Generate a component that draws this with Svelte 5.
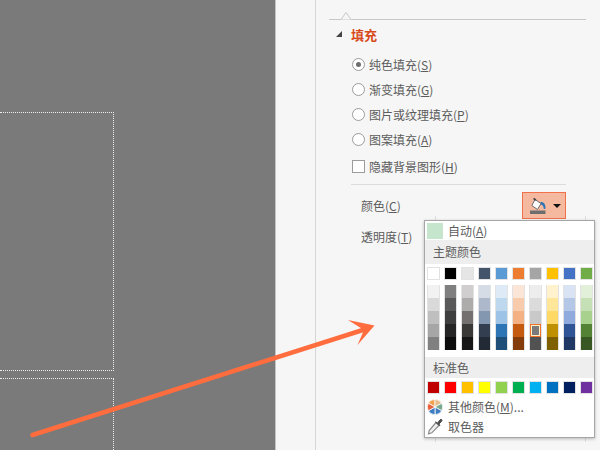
<script>
  const themeTop = ['#ffffff', '#000000', '#e7e6e6', '#44546a', '#5b9bd5', '#ed7d31', '#a5a5a5', '#ffc000', '#4472c4', '#70ad47'];
  const shades = [
    ['#f2f2f2', '#d9d9d9', '#bfbfbf', '#a6a6a6', '#808080'],
    ['#7f7f7f', '#595959', '#3f3f3f', '#262626', '#0d0d0d'],
    ['#d0cece', '#aeabab', '#757070', '#3b3838', '#171616'],
    ['#d6dce5', '#adb9ca', '#8497b0', '#333f50', '#222a35'],
    ['#deebf7', '#bdd7ee', '#9dc3e6', '#2e75b6', '#1f4e79'],
    ['#fbe5d6', '#f8cbad', '#f4b183', '#c55a11', '#843c0c'],
    ['#ededed', '#dbdbdb', '#c9c9c9', '#7b7b7b', '#525252'],
    ['#fff2cc', '#ffe699', '#ffd966', '#bf9000', '#7f6000'],
    ['#dae3f3', '#b4c7e7', '#8faadc', '#2f5597', '#203864'],
    ['#e2f0d9', '#c5e0b4', '#a9d18e', '#548235', '#385723']
  ];
  const standard = ['#c00000', '#ff0000', '#ffc000', '#ffff00', '#92d050', '#00b050', '#00b0f0', '#0070c0', '#002060', '#7030a0'];
  const fills = [
    { text: '纯色填充', key: 'S', checked: true },
    { text: '渐变填充', key: 'G' },
    { text: '图片或纹理填充', key: 'P' },
    { text: '图案填充', key: 'A' }
  ];
</script>

<div class="screen">
  <div class="slide">
    <div class="placeholder first"></div>
    <div class="placeholder second"></div>
  </div>

  <div class="gutter"></div>

  <div class="pane">
    <div class="tabline">
      <svg class="notch" width="16" height="9" viewBox="0 0 16 9">
        <path d="M0 8.5H3L8 1.5L13 8.5H16" fill="#f6f6f6" stroke="#c8c8c8" />
      </svg>
    </div>

    <div class="section-head">
      <span class="tri"></span>
      <span class="section-title">填充</span>
    </div>

    <div class="options">
      {#each fills as f}
        <div class="option">
          <span class="radio" class:on={f.checked}></span>
          <span>{f.text}(<u>{f.key}</u>)</span>
        </div>
      {/each}
      <div class="option check-row">
        <span class="check"></span>
        <span>隐藏背景图形(<u>H</u>)</span>
      </div>
    </div>

    <div class="divider"></div>

    <div class="color-row">
      <span>颜色(<u>C</u>)</span>
      <div class="fill-btn">
        <svg width="18" height="18" viewBox="0 0 18 18">
          <path d="M5 2.500L11 6.500L7.500 12.500L1.800 8.500Z" fill="#fff" stroke="#6a6a6a" />
          <path d="M3.500 1.500L6 3" stroke="#444" stroke-width="1.500" fill="none" />
          <path d="M10.500 5C13.500 4.500 15.500 7 15.500 10.500C15.500 12.500 13.500 12.500 13.500 10.500C13.500 8.500 12 8 11 7.500Z" fill="#2e75b6" />
          <rect x="0" y="13.500" width="15.500" height="3.500" fill="#6e6e6e" />
        </svg>
        <span class="caret"></span>
      </div>
    </div>

    <div class="alpha-row">
      <span>透明度(<u>T</u>)</span>
      <span class="slider-end"></span>
    </div>

    <div class="ghost-ticks"></div>
  </div>

  <div class="menu">
    <div class="auto-row">
      <span class="auto-swatch"></span>
      <span>自动(<u>A</u>)</span>
    </div>
    <div class="menu-head">主题颜色</div>
    <div class="swatches top">
      {#each themeTop as c}
        <span class="swatch" style:background={c}></span>
      {/each}
    </div>
    <div class="shades">
      {#each shades as col, i}
        <div class="shade-col">
          {#each col as c, j}
            <span class="shade" class:picked={i === 6 && j === 3} style:background={c}></span>
          {/each}
        </div>
      {/each}
    </div>
    <div class="menu-head std">标准色</div>
    <div class="swatches">
      {#each standard as c}
        <span class="swatch" style:background={c}></span>
      {/each}
    </div>
    <div class="menu-item more">
      <svg width="16" height="16" viewBox="0 0 16 16">
        <g stroke="#fff" stroke-width="0.800">
          <path d="M8 8L8 0.300A7.700 7.700 0 0 0 1.300 4.200Z" fill="#f0a050" />
          <path d="M8 8L8 0.300A7.700 7.700 0 0 1 14.700 4.200Z" fill="#e6bd8c" />
          <path d="M8 8L14.700 4.200A7.700 7.700 0 0 1 14.700 11.800Z" fill="#78a88e" />
          <path d="M8 8L14.700 11.800A7.700 7.700 0 0 1 8 15.700Z" fill="#3f7cc0" />
          <path d="M8 8L8 15.700A7.700 7.700 0 0 1 1.300 11.800Z" fill="#3f7cc0" />
          <path d="M8 8L1.300 11.800A7.700 7.700 0 0 1 1.300 4.200Z" fill="#e8603c" />
        </g>
      </svg>
      <span>其他颜色(<u>M</u>)...</span>
    </div>
    <div class="menu-item">
      <svg width="16" height="17" viewBox="0 0 16 17">
        <path d="M9 4.500L12 7.500L4.800 14.800L1.500 15.800L2.200 12.500Z" fill="#f0f0f0" stroke="#8a8a8a" stroke-width="1.200" />
        <path d="M8.500 4L10.500 5L13 1.800C14.200 0.600 15.800 2 14.700 3.300L12 6L13 8Z" fill="#505050" stroke="#505050" />
      </svg>
      <span>取色器</span>
    </div>
  </div>

  <svg class="arrow" width="600" height="450" viewBox="0 0 600 450">
    <path d="M32.500 435L366 329" stroke="#ff6d3f" stroke-width="4.500" stroke-linecap="round" fill="none" />
    <path d="M348 320L374.500 325.500L357.500 345L364 330Z" fill="#ff6d3f" />
  </svg>
</div>

<style>
  :global(body) {
    margin: 0;
  }
  .screen {
    position: relative;
    display: flex;
    width: 600px;
    height: 450px;
    overflow: hidden;
    font-family: "Noto Sans CJK SC", "Liberation Sans", sans-serif;
    font-size: 12px;
    color: #5c5c5c;
    background: #f6f6f6;
  }
  u {
    text-underline-offset: 1px;
  }

  .slide {
    flex: 0 0 276px;
    background: #7a7a7a;
    border-right: 1px solid #c4c4c4;
    padding-top: 112px;
    box-sizing: border-box;
  }
  .placeholder {
    width: 114px;
    box-sizing: border-box;
    border-top: 1px dotted #eee;
    border-right: 1px dotted #eee;
  }
  .first {
    height: 259px;
    border-bottom: 1px dotted #eee;
  }
  .second {
    height: 90px;
    margin-top: 7px;
  }

  .gutter {
    flex: 0 0 39px;
    border-right: 1px solid #d6d6d6;
  }

  .pane {
    flex: 1;
    position: relative;
    padding-left: 13px;
  }
  .tabline {
    position: relative;
    width: 257px;
    height: 20px;
    border-bottom: 1px solid #c8c8c8;
    box-sizing: border-box;
  }
  .notch {
    position: absolute;
    left: 9px;
    bottom: -1px;
  }
  .section-head {
    display: flex;
    align-items: center;
    height: 28px;
    padding-left: 7px;
    margin-bottom: 3px;
  }
  .tri {
    width: 0;
    height: 0;
    border-style: solid;
    border-width: 0 0 6px 6px;
    border-color: transparent transparent #444 transparent;
    margin-right: 9px;
  }
  .section-title {
    color: #d84a1b;
    font-size: 13px;
    font-weight: 700;
    line-height: 1;
  }

  .options {
    padding-left: 23px;
    padding-top: 1px;
  }
  .option {
    display: flex;
    align-items: center;
    gap: 4px;
    height: 25px;
  }
  .radio {
    width: 11px;
    height: 11px;
    border: 1px solid #9c9c9c;
    border-radius: 50%;
    background: #fff;
    display: flex;
    align-items: center;
    justify-content: center;
  }
  .radio.on::after {
    content: "";
    width: 5px;
    height: 5px;
    border-radius: 50%;
    background: #6e6e6e;
  }
  .check-row {
    height: 29px;
  }
  .check {
    width: 11px;
    height: 11px;
    border: 1px solid #9c9c9c;
    background: #fff;
  }

  .divider {
    height: 1px;
    background: #dcdcdc;
    width: 215px;
    margin-left: 22px;
    margin-top: 3px;
  }

  .color-row {
    display: flex;
    align-items: center;
    justify-content: space-between;
    width: 205px;
    height: 27px;
    padding-left: 32px;
    margin-top: 7px;
  }
  .fill-btn {
    display: flex;
    align-items: center;
    gap: 5px;
    width: 44px;
    height: 27px;
    box-sizing: border-box;
    border: 1.5px solid #f0714a;
    background: #f5b9a0;
    padding-left: 7px;
  }
  .caret {
    width: 0;
    height: 0;
    border-style: solid;
    border-width: 4px 4px 0 4px;
    border-color: #111 transparent transparent transparent;
  }

  .alpha-row {
    display: flex;
    align-items: center;
    justify-content: space-between;
    width: 92px;
    padding-left: 32px;
    height: 20px;
    margin-top: 7px;
  }
  .slider-end {
    width: 3px;
    height: 8px;
    background: #777;
  }
  .ghost-ticks {
    position: absolute;
    left: 119px;
    top: 216px;
    width: 151px;
    height: 226px;
    border-left: 1px solid #dedede;
    border-right: 1px solid #dedede;
    box-sizing: border-box;
  }

  .menu {
    position: absolute;
    left: 424px;
    top: 220px;
    width: 171px;
    height: 218px;
    box-sizing: border-box;
    border: 1px solid #a6a6a6;
    background: #fff;
    box-shadow: 0 1px 3px rgba(0, 0, 0, 0.25);
    display: flex;
    flex-direction: column;
  }
  .auto-row {
    display: flex;
    align-items: center;
    gap: 5px;
    height: 20px;
    padding-left: 2px;
  }
  .auto-swatch {
    width: 16px;
    height: 16px;
    background: #c6e5cd;
  }
  .menu-head {
    height: 24px;
    line-height: 24px;
    padding-left: 8px;
    background: #eeeeee;
  }
  .menu-head.std {
    height: 21px;
    line-height: 21px;
    margin-top: 7px;
  }
  .swatches {
    display: flex;
    gap: 4px;
    padding-left: 2px;
    margin-top: 3px;
  }
  .swatch {
    width: 11px;
    height: 11px;
    border: 1px solid #e2e2e2;
  }
  .shades {
    display: flex;
    gap: 4px;
    padding-left: 2px;
    margin-top: 5px;
  }
  .shade-col {
    display: flex;
    flex-direction: column;
    width: 13px;
    box-sizing: border-box;
    border: 1px solid #e2e2e2;
    border-top: none;
    border-bottom: none;
  }
  .shade {
    display: block;
    height: 13px;
    box-sizing: border-box;
  }
  .shade.picked {
    border: 1px solid #f0712c;
    outline: 1px solid #fff2c8;
    outline-offset: -2px;
  }
  .menu-item {
    display: flex;
    align-items: center;
    gap: 5px;
    height: 21px;
    padding-left: 2px;
  }
  .menu-item.more {
    margin-top: 2px;
  }

  .arrow {
    position: absolute;
    left: 0;
    top: 0;
    pointer-events: none;
  }
</style>
